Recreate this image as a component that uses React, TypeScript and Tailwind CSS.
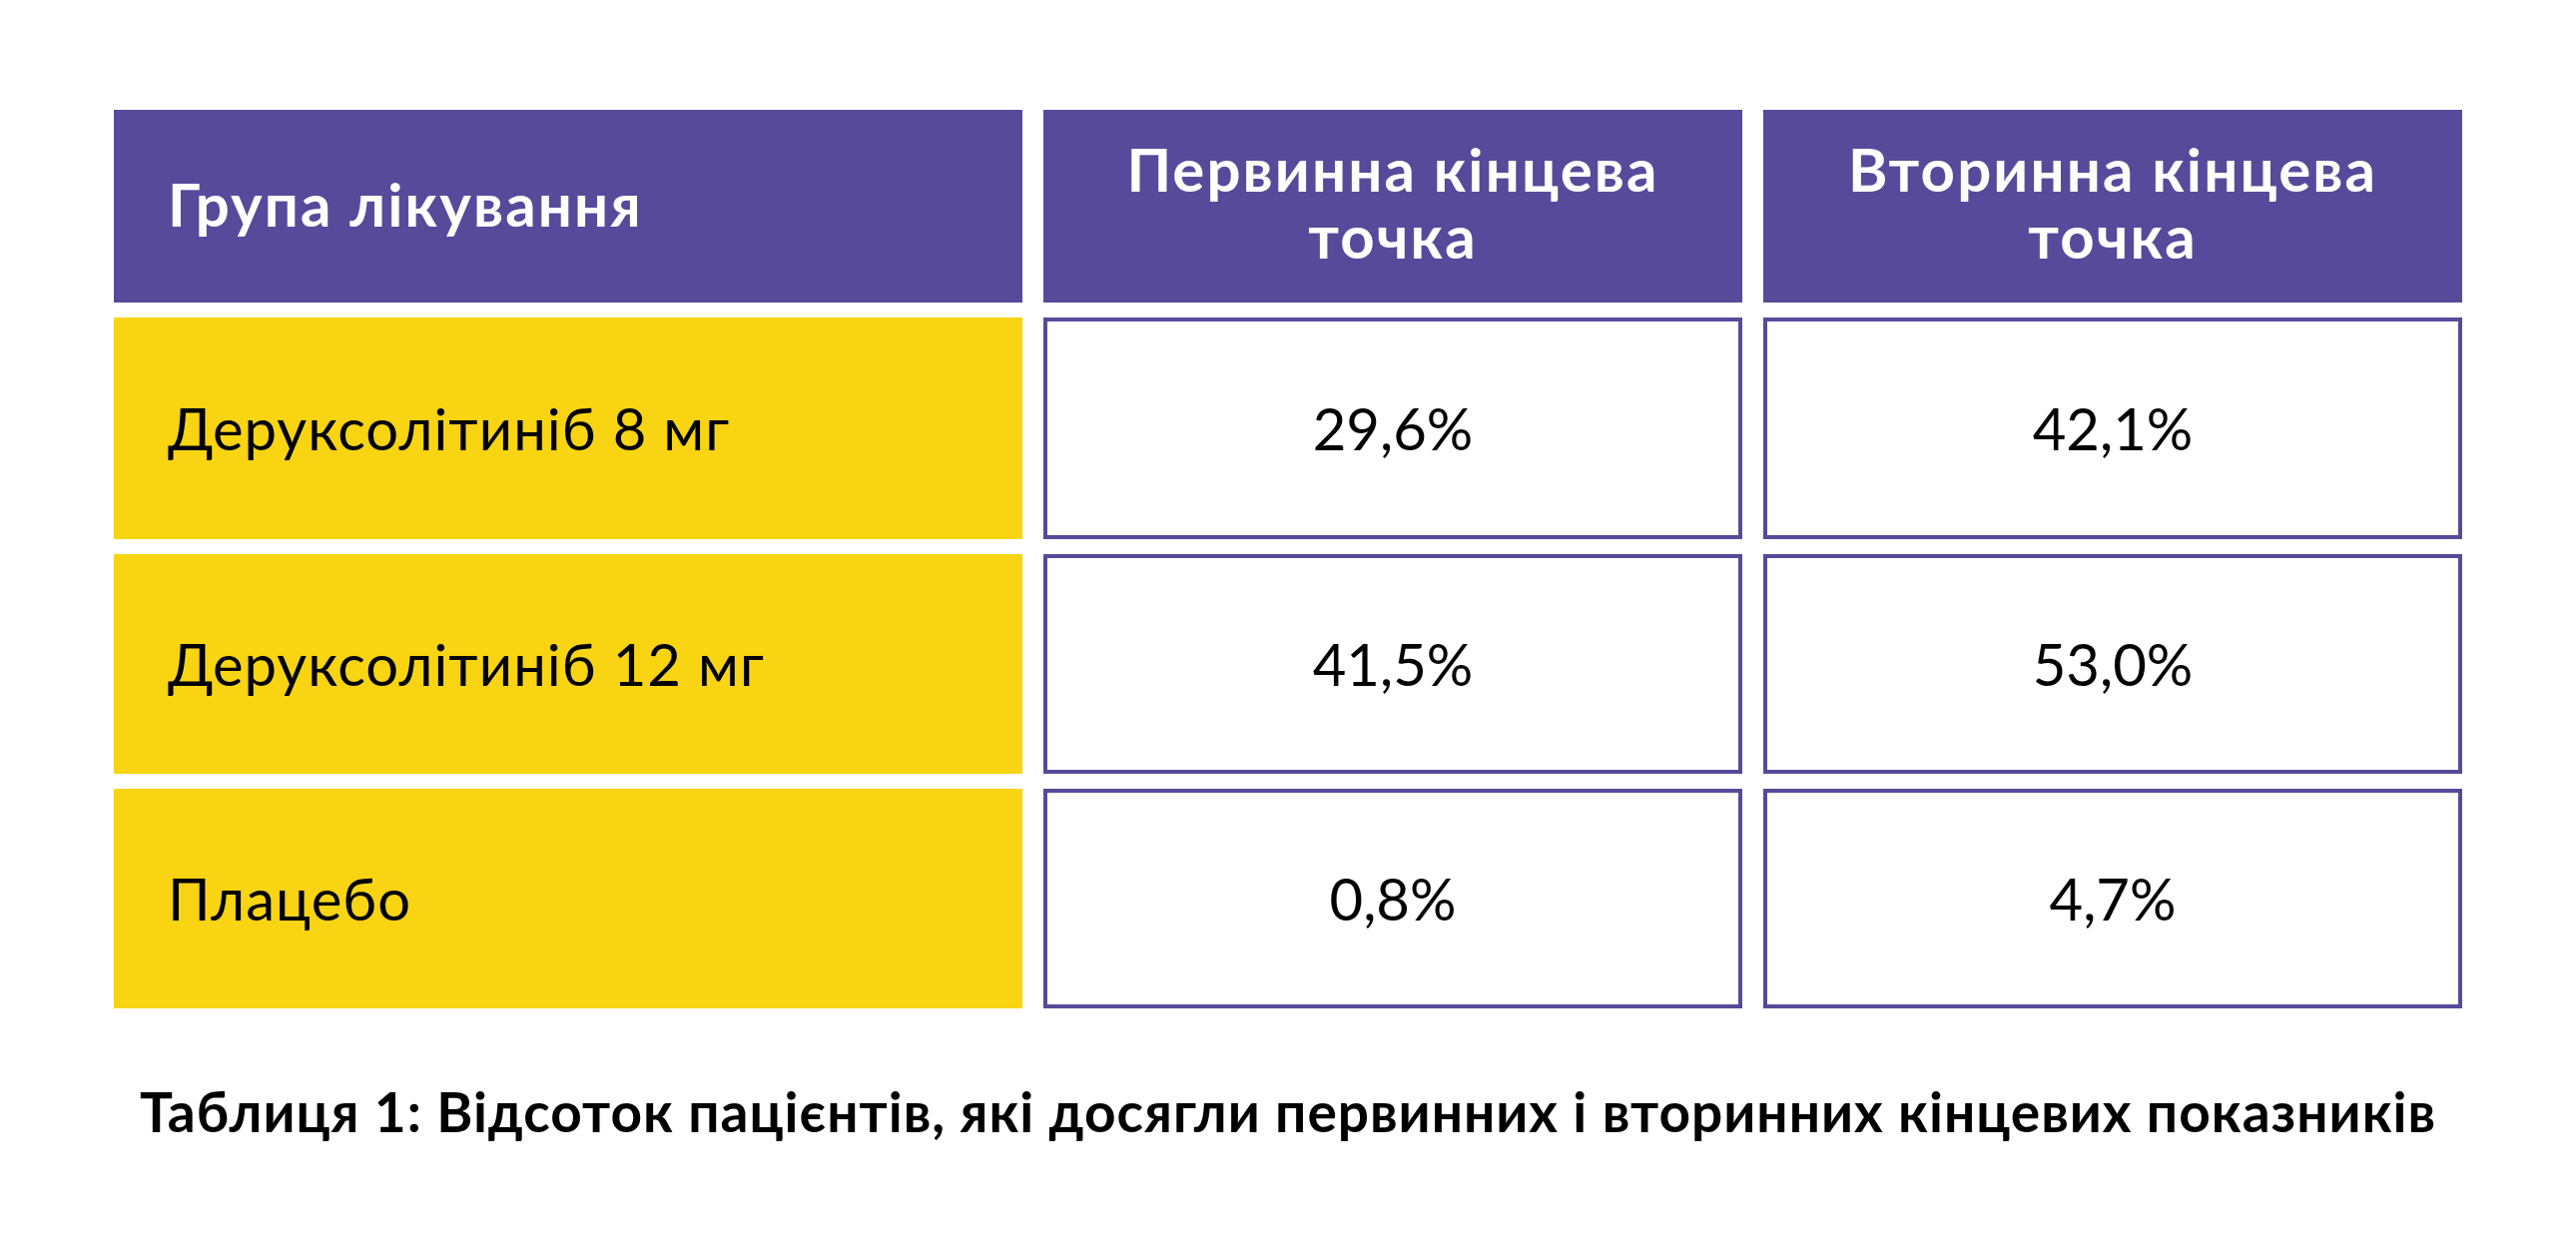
const rows = [
  { name: "Деруксолітиніб 8 мг", primary: "29,6%", secondary: "42,1%" },
  { name: "Деруксолітиніб 12 мг", primary: "41,5%", secondary: "53,0%" },
  { name: "Плацебо", primary: "0,8%", secondary: "4,7%" },
]

export default function App() {
  return (
    <div className="min-h-screen w-full bg-white font-['Lato',sans-serif] text-black">
      <div className="pl-[114px] pt-[110px]">
        <div className="grid grid-cols-[910px_700px_700px] grid-rows-[193px_222px_220px_220px] gap-x-[21px] gap-y-[15px]">
          <div className="flex items-center bg-[#574a9a] pb-[6px] pl-[54px] text-[60px] font-bold leading-none tracking-[0.035em] text-white">
            Група лікування
          </div>
          <div className="flex items-center justify-center bg-[#574a9a] pb-[8px] text-center text-[60px] font-bold leading-[67px] tracking-[0.035em] text-white">
            Первинна кінцева
            <br />
            точка
          </div>
          <div className="flex items-center justify-center bg-[#574a9a] pb-[8px] text-center text-[60px] font-bold leading-[67px] tracking-[0.035em] text-white">
            Вторинна кінцева
            <br />
            точка
          </div>

          {rows.map((row) => (
            <>
              <div key={row.name} className="flex items-center bg-[#f8d413] pl-[54px] text-[58px] leading-none tracking-[0.018em]">
                {row.name}
              </div>
              <div className="flex items-center justify-center border-4 border-[#574a9a] text-[58px] leading-none">
                {row.primary}
              </div>
              <div className="flex items-center justify-center border-4 border-[#574a9a] text-[58px] leading-none">
                {row.secondary}
              </div>
            </>
          ))}
        </div>
      </div>

      <p className="mt-[76px] text-center text-[55px] font-bold leading-none tracking-[0.018em]">
        Таблиця 1: Відсоток пацієнтів, які досягли первинних і вторинних кінцевих показників
      </p>
    </div>
  )
}
